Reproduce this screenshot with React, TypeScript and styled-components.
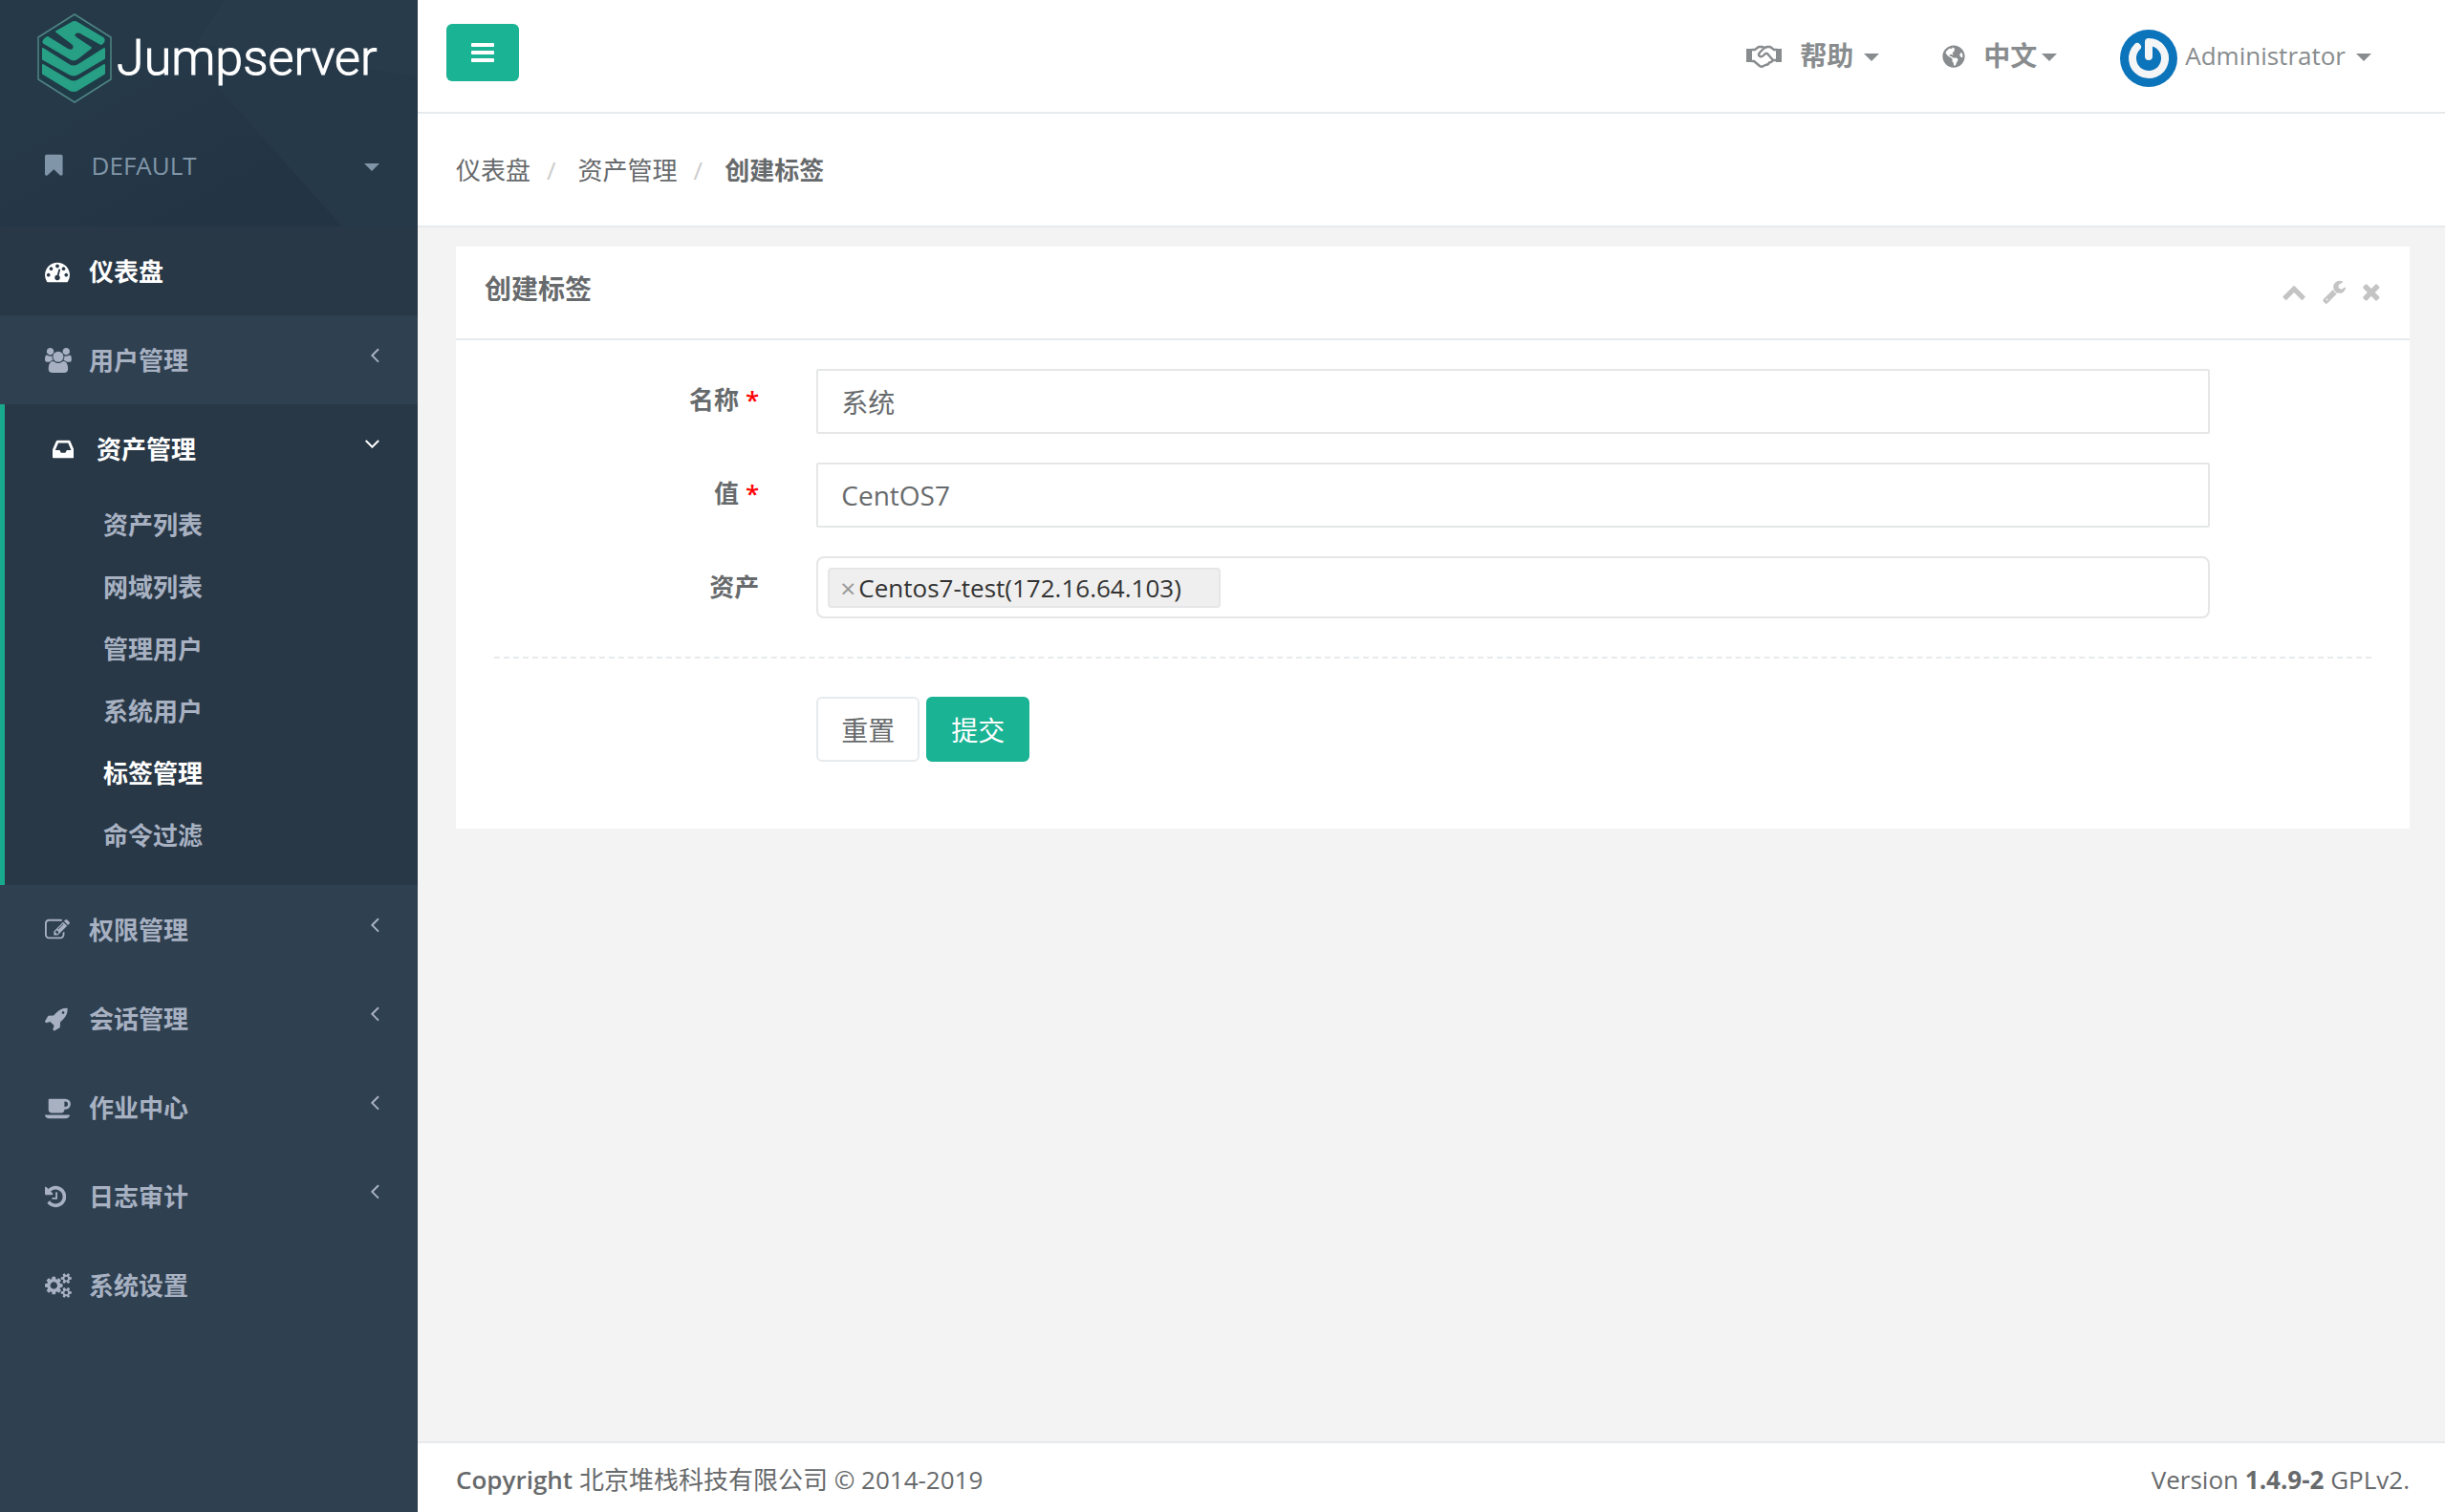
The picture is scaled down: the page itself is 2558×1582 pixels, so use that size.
import React from 'react';
import styled, { createGlobalStyle } from 'styled-components';
import { FaGlobeAmericas } from 'react-icons/fa';

const color = {
  green: '#1ab394',
  text: '#676a6c',
  muted: '#888c8e',
  line: '#e7eaec',
  field: '#e5e6e7',
  page: '#f3f3f4',
  side: '#2f4050',
  sideDark: '#293846',
  sideText: '#a7b1c2',
};

const GlobalStyle = createGlobalStyle`
  *, *::before, *::after { box-sizing: border-box; }
  body {
    margin: 0;
    background: ${color.page};
    color: ${color.text};
    font-family: "Open Sans", "Noto Sans CJK SC", sans-serif;
    font-size: 26px;
    line-height: 36px;
  }
  a { color: inherit; text-decoration: none; }
  ul, ol { margin: 0; padding: 0; list-style: none; }
  button, input { font: inherit; color: inherit; }
  button { cursor: pointer; }
`;

/* ---------- icons ---------- */

type Glyph = { x: number; w: number; d: string };

const glyphs: Record<string, Glyph> = {
  dashboard: { x: 0, w: 1792, d: 'M384 1152q0-53-37.5-90.5t-90.5-37.5-90.5 37.5-37.5 90.5 37.5 90.5 90.5 37.5 90.5-37.5 37.5-90.5zm192-448q0-53-37.5-90.5t-90.5-37.5-90.5 37.5-37.5 90.5 37.5 90.5 90.5 37.5 90.5-37.5 37.5-90.5zm428 481l101-382q6-26-7.5-48.5t-38.5-29.5-48 6.5-30 39.5l-101 382q-60 5-107 43.5t-63 98.5q-20 77 20 146t117 89 146-20 89-117q16-60-6-117t-72-91zm660-33q0-53-37.5-90.5t-90.5-37.5-90.5 37.5-37.5 90.5 37.5 90.5 90.5 37.5 90.5-37.5 37.5-90.5zm-640-640q0-53-37.5-90.5t-90.5-37.5-90.5 37.5-37.5 90.5 37.5 90.5 90.5 37.5 90.5-37.5 37.5-90.5zm448 192q0-53-37.5-90.5t-90.5-37.5-90.5 37.5-37.5 90.5 37.5 90.5 90.5 37.5 90.5-37.5 37.5-90.5zm320 448q0 261-141 483-19 29-54 29h-1402q-35 0-54-29-141-221-141-483 0-182 71-348t191-286 286-191 348-71 348 71 286 191 191 286 71 348z' },
  users: { x: -64, w: 1920, d: 'M529 896q-162 5-265 128h-134q-82 0-138-40.5t-56-118.5q0-353 124-353 6 0 43.5 21t97.5 42.5 119 21.5q67 0 133-23-5 37-5 66 0 139 81 256zm1071 637q0 120-73 189.5t-194 69.5h-874q-121 0-194-69.5t-73-189.5q0-53 3.5-103.5t14-109 26.5-108.5 43-97.5 62-81 85.5-53.5 111.5-20q10 0 43 21.5t73 48 107 48 135 21.5 135-21.5 107-48 73-48 43-21.5q61 0 111.5 20t85.5 53.5 62 81 43 97.5 26.5 108.5 14 109 3.5 103.5zm-1024-1277q0 106-75 181t-181 75-181-75-75-181 75-181 181-75 181 75 75 181zm704 384q0 159-112.5 271.5t-271.5 112.5-271.5-112.5-112.5-271.5 112.5-271.5 271.5-112.5 271.5 112.5 112.5 271.5zm576 225q0 78-56 118.5t-138 40.5h-134q-103-123-265-128 81-117 81-256 0-29-5-66 66 23 133 23 59 0 119-21.5t97.5-42.5 43.5-21q124 0 124 353zm-128-609q0 106-75 181t-181 75-181-75-75-181 75-181 181-75 181 75 75 181z' },
  inbox: { x: 128, w: 1536, d: 'M1151 960h316q-1-3-2.5-8.5t-2.5-7.5l-212-496h-708l-212 496q-1 3-2.5 8.5t-2.5 7.5h316l95 192h320zm513 30v482q0 26-19 45t-45 19h-1408q-26 0-45-19t-19-45v-482q0-62 25-123l238-552q10-25 36.5-42t52.5-17h832q26 0 52.5 17t36.5 42l238 552q25 61 25 123z' },
  edit: { x: 0, w: 1792, d: 'M888 1184l116-116-152-152-116 116v56h96v96h56zm440-720q-16-16-33 1l-350 350q-17 17-1 33t33-1l350-350q17-17 1-33zm80 594v190q0 119-84.5 203.5t-203.5 84.5h-832q-119 0-203.5-84.5t-84.5-203.5v-832q0-119 84.5-203.5t203.5-84.5h832q63 0 117 25 15 7 18 23 3 17-9 29l-49 49q-14 14-32 8-23-6-45-6h-832q-66 0-113 47t-47 113v832q0 66 47 113t113 47h832q66 0 113-47t47-113v-126q0-13 9-22l64-64q15-15 35-7t20 29zm-96-738l288 288-672 672h-288v-288zm444 132l-92 92-288-288 92-92q28-28 68-28t68 28l152 152q28 28 28 68t-28 68z' },
  rocket: { x: 32, w: 1664, d: 'M1440 448q0-40-28-68t-68-28-68 28-28 68 28 68 68 28 68-28 28-68zm224-288q0 249-75.5 430.5t-253.5 360.5q-81 80-195 176l-20 379q-2 16-16 26l-384 224q-7 4-16 4-12 0-23-9l-64-64q-13-14-8-32l85-276-281-281-276 85q-3 1-9 1-14 0-23-9l-64-64q-17-19-5-39l224-384q10-14 26-16l379-20q96-114 176-195 188-187 358-258t431-71q14 0 24 9.5t10 22.5z' },
  coffee: { x: 0, w: 1920, d: 'M1664 640q0-80-56-136t-136-56h-64v384h64q80 0 136-56t56-136zm-1664 768h1792q0 106-75 181t-181 75h-1280q-106 0-181-75t-75-181zm1856-768q0 159-112.5 271.5t-271.5 112.5h-64v32q0 92-66 158t-158 66h-704q-92 0-158-66t-66-158v-736q0-26 19-45t45-19h1152q159 0 271.5 112.5t112.5 271.5z' },
  history: { x: 128, w: 1536, d: 'M1664 896q0 156-61 298t-164 245-245 164-298 61q-172 0-327-72.5t-264-204.5q-7-10-6.5-22.5t8.5-20.5l137-138q10-9 25-9 16 2 23 12 73 95 179 147t225 52q104 0 198.5-40.5t163.5-109.5 109.5-163.5 40.5-198.5-40.5-198.5-109.5-163.5-163.5-109.5-198.5-40.5q-98 0-188 35.5t-160 101.5l137 138q31 30 14 69-17 40-59 40h-448q-26 0-45-19t-19-45v-448q0-42 40-59 39-17 69 14l130 129q107-101 244.5-156.5t284.5-55.5q156 0 298 61t245 164 164 245 61 298zm-640-288v448q0 14-9 23t-23 9h-320q-14 0-23-9t-9-23v-64q0-14 9-23t23-9h224v-352q0-14 9-23t23-9h64q14 0 23 9t9 23z' },
  cogs: { x: -64, w: 1920, d: 'M832 896q0-106-75-181t-181-75-181 75-75 181 75 181 181 75 181-75 75-181zm768 512q0-52-38-90t-90-38-90 38-38 90q0 53 37.5 90.5t90.5 37.5 90.5-37.5 37.5-90.5zm0-1024q0-52-38-90t-90-38-90 38-38 90q0 53 37.5 90.5t90.5 37.5 90.5-37.5 37.5-90.5zm-384 421v185q0 10-7 19.5t-16 10.5l-155 24q-11 35-32 76 34 48 90 115 7 11 7 20 0 12-7 19-23 30-82.5 89.5t-78.5 59.5q-11 0-21-7l-115-90q-37 19-77 31-11 108-23 155-7 24-30 24h-186q-11 0-20-7.5t-10-17.5l-23-153q-34-10-75-31l-118 89q-7 7-20 7-11 0-21-8-144-133-144-160 0-9 7-19 10-14 41-53t47-61q-23-44-35-82l-152-24q-10-1-17-9.5t-7-19.5v-185q0-10 7-19.5t16-10.5l155-24q11-35 32-76-34-48-90-115-7-11-7-20 0-12 7-20 22-30 82-89t79-59q11 0 21 7l115 90q34-18 77-32 11-108 23-154 7-24 30-24h186q11 0 20 7.5t10 17.5l23 153q34 10 75 31l118-89q8-7 20-7 11 0 21 8 144 133 144 160 0 8-7 19-12 16-42 54t-45 60q23 48 34 82l152 23q10 2 17 10.5t7 19.5zm640 533v140q0 16-149 31-12 27-30 52 51 113 51 138 0 4-4 7-122 71-124 71-8 0-46-47t-52-68q-20 2-30 2t-30-2q-14 21-52 68t-46 47q-2 0-124-71-4-3-4-7 0-25 51-138-18-25-30-52-149-15-149-31v-140q0-16 149-31 13-29 30-52-51-113-51-138 0-4 4-7 4-2 35-20t59-34 30-16q8 0 46 46.5t52 67.5q20-2 30-2t30 2q51-71 92-112l6-2q4 0 124 70 4 3 4 7 0 25-51 138 17 23 30 52 149 15 149 31zm0-1024v140q0 16-149 31-12 27-30 52 51 113 51 138 0 4-4 7-122 71-124 71-8 0-46-47t-52-68q-20 2-30 2t-30-2q-14 21-52 68t-46 47q-2 0-124-71-4-3-4-7 0-25 51-138-18-25-30-52-149-15-149-31v-140q0-16 149-31 13-29 30-52-51-113-51-138 0-4 4-7 4-2 35-20t59-34 30-16q8 0 46 46.5t52 67.5q20-2 30-2t30 2q51-71 92-112l6-2q4 0 124 70 4 3 4 7 0 25-51 138 17 23 30 52 149 15 149 31z' },
  wrench: { x: 64, w: 1664, d: 'M448 1472q0-26-19-45t-45-19-45 19-19 45 19 45 45 19 45-19 19-45zm644-420l-682 682q-37 37-90 37-52 0-91-37l-106-108q-38-36-38-90 0-53 38-91l681-681q39 98 114.5 173.5t173.5 114.5zm634-435q0 39-23 106-47 134-164.5 217.5t-258.5 83.5q-185 0-316.5-131.5t-131.5-316.5 131.5-316.5 316.5-131.5q58 0 121.5 16.5t107.5 46.5q16 11 16 28t-16 28l-293 169v224l193 107q5-3 79-48.5t135.5-81 70.5-35.5q15 0 23.5 10t8.5 25z' },
  times: { x: 288, w: 1216, d: 'M1490 1322q0 40-28 68l-136 136q-28 28-68 28t-68-28l-294-294-294 294q-28 28-68 28t-68-28l-136-136q-28-28-28-68t28-68l294-294-294-294q-28-28-28-68t28-68l136-136q28-28 68-28t68 28l294 294 294-294q28-28 68-28t68 28l136 136q28 28 28 68t-28 68l-294 294 294 294q28 28 28 68z' },
  chevronUp: { x: 64, w: 1664, d: 'M1683 1331l-166 165q-19 19-45 19t-45-19l-531-531-531 531q-19 19-45 19t-45-19l-166-165q-19-19-19-45.5t19-45.5l742-741q19-19 45-19t45 19l742 741q19 19 19 45.5t-19 45.5z' },
  bars: { x: 128, w: 1536, d: 'M1664 1344v128q0 26-19 45t-45 19h-1408q-26 0-45-19t-19-45v-128q0-26 19-45t45-19h1408q26 0 45 19t19 45zm0-512v128q0 26-19 45t-45 19h-1408q-26 0-45-19t-19-45v-128q0-26 19-45t45-19h1408q26 0 45 19t19 45zm0-512v128q0 26-19 45t-45 19h-1408q-26 0-45-19t-19-45v-128q0-26 19-45t45-19h1408q26 0 45 19t19 45z' },
  bookmark: { x: 256, w: 1280, d: 'M1420 128q23 0 44 9 33 13 52.5 41t19.5 62v1289q0 34-19.5 62t-52.5 41q-19 8-44 8-48 0-83-32l-441-424-441 424q-36 33-83 33-23 0-44-9-33-13-52.5-41t-19.5-62v-1289q0-34 19.5-62t52.5-41q21-9 44-9h1048z' },
  angleLeft: { x: 544, w: 672, d: 'M1203 544q0 13-10 23l-393 393 393 393q10 10 10 23t-10 23l-50 50q-10 10-23 10t-23-10l-466-466q-10-10-10-23t10-23l466-466q10-10 23-10t23 10l50 50q10 10 10 23z' },
  angleDown: { x: 384, w: 1024, d: 'M1395 736q0 13-10 23l-466 466q-10 10-23 10t-23-10l-466-466q-10-10-10-23t10-23l50-50q10-10 23-10t23 10l393 393 393-393q10-10 23-10t23 10l50 50q10 10 10 23z' },
};

const IconSvg = styled.svg<{ $size: number }>`
  display: block;
  flex: none;
  height: ${(p) => p.$size}px;
  fill: currentColor;
`;

function Icon({ name, size = 26 }: { name: string; size?: number }) {
  const g = glyphs[name];
  return (
    <IconSvg $size={size} viewBox={`${g.x} 0 ${g.w} 1792`} aria-hidden="true">
      <path d={g.d} />
    </IconSvg>
  );
}

const Caret = styled.span`
  flex: none;
  width: 0;
  height: 0;
  margin-top: 4px;
  border: 8px solid transparent;
  border-top-color: currentColor;
  border-bottom: 0;
`;

/* ---------- frame ---------- */

const Shell = styled.div`
  display: flex;
  min-height: 100vh;
`;

const Sidebar = styled.nav`
  flex: none;
  width: 437px;
  background: ${color.side};
  color: ${color.sideText};
`;

const Main = styled.div`
  flex: 1;
  min-width: 0;
  display: flex;
  flex-direction: column;
`;

/* ---------- sidebar ---------- */

const Profile = styled.div`
  position: relative;
  height: 237px;
  padding: 15px 40px 0 38px;
  background: #263949;
  overflow: hidden;
`;

const Facets = styled.svg`
  position: absolute;
  inset: 0;
  width: 100%;
  height: 100%;
`;

const Brand = styled.a`
  position: relative;
  display: flex;
  align-items: center;
  gap: 4px;
  height: 92px;
  color: #fff;
  font-family: Roboto, sans-serif;
  font-size: 52px;
  font-weight: 300;
  line-height: 60px;
  -webkit-text-stroke: 1px #fff;
`;

const BrandMark = styled.svg`
  flex: none;
  width: 80px;
  height: 94px;
`;

const Org = styled.button`
  position: relative;
  display: flex;
  align-items: center;
  width: 100%;
  margin-top: 48px;
  padding: 0 0 0 9px;
  border: 0;
  background: none;
  color: #8095a8;
  text-align: left;
`;

const OrgName = styled.span`
  flex: 1;
  padding-left: 30px;
`;

const MenuSection = styled.li<{ $dark?: boolean; $open?: boolean }>`
  background: ${(p) => (p.$dark ? color.sideDark : 'transparent')};
  border-left: ${(p) => (p.$open ? `5px solid #19aa8d` : '0')};
  padding: ${(p) => (p.$open ? '0 0 20px 3px' : '0')};
`;

const MenuLink = styled.a<{ $active?: boolean }>`
  display: flex;
  align-items: center;
  height: 93px;
  padding: 0 40px 0 47px;
  color: ${(p) => (p.$active ? '#fff' : color.sideText)};
  font-weight: 600;
`;

const MenuIcon = styled.span`
  flex: none;
  width: 46px;
`;

const MenuLabel = styled.span`
  flex: 1;
`;

const Arrow = styled.span`
  margin-bottom: 12px;
`;

const SubLink = styled.a<{ $active?: boolean }>`
  display: flex;
  align-items: center;
  height: 65px;
  padding-left: 100px;
  color: ${(p) => (p.$active ? '#fff' : color.sideText)};
  font-weight: 600;
`;

/* ---------- top bar ---------- */

const TopBar = styled.header`
  display: flex;
  align-items: center;
  justify-content: space-between;
  height: 119px;
  padding: 0 77px 0 30px;
  background: #fff;
  border-bottom: 2px solid ${color.line};
`;

const Toggle = styled.button`
  display: flex;
  align-items: center;
  justify-content: center;
  width: 76px;
  height: 60px;
  margin-bottom: 7px;
  border: 0;
  border-radius: 6px;
  background: ${color.green};
  color: #fff;
`;

const TopLinks = styled.ul`
  display: flex;
  align-items: center;
  gap: 66px;
  margin-bottom: 2px;
  color: ${color.muted};
`;

const TopLink = styled.a<{ $bold?: boolean }>`
  display: flex;
  align-items: center;
  font-size: ${(p) => (p.$bold ? '28px' : '26px')};
  font-weight: ${(p) => (p.$bold ? 600 : 400)};
`;

const TopIcon = styled.span`
  display: flex;
  margin-top: 2px;
`;

const TopText = styled.span<{ $before: number; $after: number }>`
  margin: 0 ${(p) => p.$after}px 0 ${(p) => p.$before}px;
`;

const Avatar = styled.svg`
  width: 60px;
  height: 60px;
  margin-top: 6px;
`;

/* ---------- breadcrumb ---------- */

const Heading = styled.nav`
  height: 119px;
  padding: 0 40px;
  display: flex;
  align-items: center;
  background: #fff;
  border-bottom: 2px solid ${color.line};
`;

const Crumbs = styled.ol`
  display: flex;
`;

const Crumb = styled.li`
  & + &::before {
    content: '/';
    padding: 0 23px 0 17px;
    color: #ccc;
    font-weight: 400;
  }
  &:last-child { font-weight: 600; }
`;

/* ---------- card ---------- */

const Content = styled.main`
  flex: 1;
  padding: 20px 37px 40px 40px;
`;

const Card = styled.section`
  background: #fff;
`;

const CardHead = styled.div`
  display: flex;
  align-items: center;
  justify-content: space-between;
  height: 98px;
  padding: 0 31px 8px 30px;
  border-bottom: 2px solid ${color.line};
`;

const CardTitle = styled.h5`
  margin: 0;
  font-size: 28px;
  font-weight: 600;
`;

const Tools = styled.div`
  display: flex;
  gap: 18px;
  padding-top: 5px;
`;

const ToolButton = styled.button`
  padding: 0;
  border: 0;
  background: none;
  color: #c4c4c4;
`;

const Form = styled.form`
  padding: 30px 40px 40px;
`;

const Group = styled.div`
  display: grid;
  grid-template-columns: repeat(12, minmax(0, 1fr));
  margin: 0 -30px 30px;
`;

const Label = styled.label`
  grid-column: span 2;
  padding: 14px 30px 0;
  font-weight: 600;
  text-align: right;
`;

const Required = styled.span`
  margin-left: 7px;
  color: #f00;
`;

const Field = styled.div`
  grid-column: 3 / span 9;
  padding: 0 30px;
`;

const TextInput = styled.input`
  display: block;
  width: 100%;
  height: 68px;
  padding: 12px 24px;
  border: 2px solid ${color.field};
  border-radius: 2px;
  background: #fff;
  font-size: 28px;
  outline: 0;
`;

const MultiSelect = styled.div`
  display: flex;
  align-items: center;
  height: 65px;
  padding: 0 10px;
  border: 2px solid ${color.field};
  border-radius: 8px;
`;

const Tag = styled.span`
  display: flex;
  align-items: center;
  height: 42px;
  padding: 0 39px 0 11px;
  border: 2px solid ${color.field};
  border-radius: 4px;
  background: #efefef;
  color: #333;
`;

const TagRemove = styled.button`
  width: 19px;
  padding: 0;
  border: 0;
  background: none;
  color: #999;
  font-size: 28px;
  text-align: left;
`;

const TagSearch = styled.input`
  flex: 1;
  min-width: 0;
  border: 0;
  background: none;
  outline: 0;
`;

const Divider = styled.hr`
  margin: 40px 0;
  border: 0;
  border-top: 2px dashed ${color.line};
`;

const Actions = styled.div`
  display: flex;
  gap: 7px;
`;

const Button = styled.button<{ $primary?: boolean }>`
  height: 68px;
  padding: 2px 24px 0;
  border: 2px solid ${(p) => (p.$primary ? color.green : color.line)};
  border-radius: 6px;
  background: ${(p) => (p.$primary ? color.green : '#fff')};
  color: ${(p) => (p.$primary ? '#fff' : color.text)};
  font-size: 28px;
`;

/* ---------- footer ---------- */

const Footer = styled.footer`
  display: flex;
  align-items: center;
  justify-content: space-between;
  height: 74px;
  padding: 4px 37px 0 40px;
  background: #fff;
  border-top: 2px solid ${color.line};
`;

const Strong = styled.strong<{ $heavy?: boolean }>`
  font-weight: ${(p) => (p.$heavy ? 700 : 600)};
`;

/* ---------- data ---------- */

const assetLinks = ['资产列表', '网域列表', '管理用户', '系统用户', '标签管理', '命令过滤'];

type Entry = { icon: string; label: string; arrow?: boolean; active?: boolean; children?: string[] };

const menu: Entry[] = [
  { icon: 'dashboard', label: '仪表盘', active: true },
  { icon: 'users', label: '用户管理', arrow: true },
  { icon: 'inbox', label: '资产管理', arrow: true, active: true, children: assetLinks },
  { icon: 'edit', label: '权限管理', arrow: true },
  { icon: 'rocket', label: '会话管理', arrow: true },
  { icon: 'coffee', label: '作业中心', arrow: true },
  { icon: 'history', label: '日志审计', arrow: true },
  { icon: 'cogs', label: '系统设置' },
];

function Logo() {
  return (
    <BrandMark viewBox="-1 -1 80 94" aria-hidden="true">
      <path d="M39 0L77 24V68L39 92L1 68V24Z" fill="#203b48" stroke="#4f8583" strokeWidth="1.5" />
      <g fill="#27a085" stroke="#27a085" strokeWidth="2" strokeLinejoin="round">
        <path d="M20 18L36 9Q39 7 42 9L69 25Q71 28 67 31L47 20Q42 17 39 20Q37 22 41 25L56 35L42 46Q38 49 34 46L7 30Q5 27 11 24L32 37Q36 39 38 36Q40 33 36 30Z" />
        <path d="M6 36L33 53Q38 56 43 53L70 36V46L43 62Q38 65 33 62L6 47Z" />
        <path d="M6 53L33 69Q38 72 43 69L70 53V62L42 79Q38 81 34 79L6 62Z" />
      </g>
    </BrandMark>
  );
}

function Handshake() {
  return (
    <svg width="37" height="24" viewBox="0 0 37 24" fill="none" stroke="currentColor" strokeWidth="2.4" strokeLinejoin="round" strokeLinecap="round" aria-hidden="true">
      <path d="M0 4H6V18H0ZM31 4H37V18H31Z" fill="currentColor" stroke="none" />
      <path d="M6 5H9L13 2H17L19 3L22 2H25L29 5H32" />
      <path d="M6 17H8L14 22Q16 23.5 18 22L20 21Q23 21 24 18.500Q27 18 28 16H32" />
      <path d="M19 3L14 8Q12 10 14 12Q16 13 18 11L20 9H22L28 16" />
    </svg>
  );
}

export default function App() {
  return (
    <>
      <GlobalStyle />
      <Shell>
        <Sidebar aria-label="主菜单">
          <Profile>
            <Facets viewBox="0 0 437 237" preserveAspectRatio="none" aria-hidden="true">
              <defs>
                <linearGradient id="shade" x1="0" y1="0" x2="1" y2="1">
                  <stop offset="0.3" stopColor="#233444" stopOpacity="0" />
                  <stop offset="0.8" stopColor="#233444" />
                </linearGradient>
              </defs>
              <path d="M235 0H437V80L205 45Z" fill="#283b4a" />
              <path d="M0 60L205 45L225 88L358 237H0Z" fill="url(#shade)" />
            </Facets>
            <Brand href="#">
              <Logo />
              Jumpserver
            </Brand>
            <Org type="button">
              <Icon name="bookmark" />
              <OrgName>DEFAULT</OrgName>
              <Caret />
            </Org>
          </Profile>
          <ul>
            {menu.map((m) => (
              <MenuSection key={m.label} $dark={m.active} $open={!!m.children}>
                <MenuLink href="#" $active={m.active}>
                  <MenuIcon>
                    <Icon name={m.icon} />
                  </MenuIcon>
                  <MenuLabel>{m.label}</MenuLabel>
                  {m.arrow && (
                    <Arrow>
                      <Icon name={m.children ? 'angleDown' : 'angleLeft'} />
                    </Arrow>
                  )}
                </MenuLink>
                {m.children && (
                  <ul>
                    {m.children.map((c) => (
                      <li key={c}>
                        <SubLink href="#" $active={c === '标签管理'}>
                          {c}
                        </SubLink>
                      </li>
                    ))}
                  </ul>
                )}
              </MenuSection>
            ))}
          </ul>
        </Sidebar>

        <Main>
          <TopBar>
            <Toggle type="button" aria-label="切换菜单">
              <Icon name="bars" size={28} />
            </Toggle>
            <TopLinks>
              <li>
                <TopLink href="#" $bold>
                  <TopIcon><Handshake /></TopIcon>
                  <TopText $before={19} $after={11}>帮助</TopText>
                  <Caret />
                </TopLink>
              </li>
              <li>
                <TopLink href="#" $bold>
                  <TopIcon><FaGlobeAmericas size={24} /></TopIcon>
                  <TopText $before={19} $after={5}>中文</TopText>
                  <Caret />
                </TopLink>
              </li>
              <li>
                <TopLink href="#">
                  <Avatar viewBox="0 0 60 60" aria-hidden="true">
                    <circle cx="30" cy="30" r="30" fill="#0c74ba" />
                    <path d="M30 28V13A17 17 0 1 1 18 18" fill="none" stroke="#f4f5f6" strokeWidth="8" strokeLinecap="round" strokeLinejoin="round" />
                  </Avatar>
                  <TopText $before={8} $after={11}>Administrator</TopText>
                  <Caret />
                </TopLink>
              </li>
            </TopLinks>
          </TopBar>

          <Heading aria-label="面包屑">
            <Crumbs>
              <Crumb><a href="#">仪表盘</a></Crumb>
              <Crumb><a href="#">资产管理</a></Crumb>
              <Crumb>创建标签</Crumb>
            </Crumbs>
          </Heading>

          <Content>
            <Card>
              <CardHead>
                <CardTitle>创建标签</CardTitle>
                <Tools>
                  <ToolButton type="button" aria-label="折叠"><Icon name="chevronUp" /></ToolButton>
                  <ToolButton type="button" aria-label="设置"><Icon name="wrench" /></ToolButton>
                  <ToolButton type="button" aria-label="关闭"><Icon name="times" /></ToolButton>
                </Tools>
              </CardHead>
              <Form onSubmit={(e) => e.preventDefault()}>
                <Group>
                  <Label htmlFor="name">名称<Required>*</Required></Label>
                  <Field><TextInput id="name" defaultValue="系统" /></Field>
                </Group>
                <Group>
                  <Label htmlFor="value">值<Required>*</Required></Label>
                  <Field><TextInput id="value" defaultValue="CentOS7" /></Field>
                </Group>
                <Group>
                  <Label htmlFor="assets">资产</Label>
                  <Field>
                    <MultiSelect>
                      <Tag>
                        <TagRemove type="button" aria-label="移除">×</TagRemove>
                        Centos7-test(172.16.64.103)
                      </Tag>
                      <TagSearch id="assets" />
                    </MultiSelect>
                  </Field>
                </Group>
                <Divider />
                <Group>
                  <Field>
                    <Actions>
                      <Button type="reset">重置</Button>
                      <Button type="submit" $primary>提交</Button>
                    </Actions>
                  </Field>
                </Group>
              </Form>
            </Card>
          </Content>

          <Footer>
            <span><Strong>Copyright</Strong> 北京堆栈科技有限公司 © 2014-2019</span>
            <span>Version <Strong $heavy>1.4.9-2</Strong> GPLv2.</span>
          </Footer>
        </Main>
      </Shell>
    </>
  );
}
